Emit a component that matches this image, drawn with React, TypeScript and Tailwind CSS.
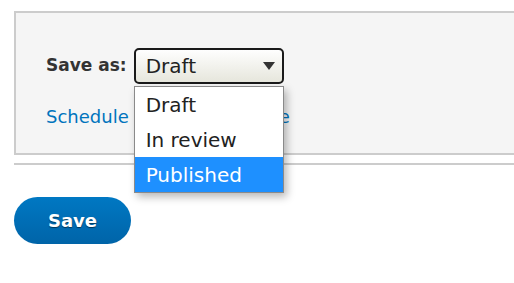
export default function App() {
  const options = ["Draft", "In review", "Published"];

  return (
    <div className="min-h-screen bg-white pl-[14px] pt-[11px] font-['DejaVu_Sans',sans-serif]">
      {/* panneau de l'état de modération */}
      <div className="h-[144px] border-2 border-r-0 border-[#cccccc] bg-[#f5f5f5] pl-[30px] pt-[35px]">
        <div className="flex items-center gap-[7px]">
          <label className="text-[17px] font-bold text-[#333333]">Save as:</label>
          <div className="relative">
            <div className="flex h-[36px] w-[150px] items-center justify-between rounded-[5px] border-2 border-[#1a1a1a] bg-gradient-to-b from-[#fefefe] to-[#e6e6dc] pl-[10px] pr-[7px] text-[20px] text-[#222222]">
              <span>Draft</span>
              <svg width="12" height="8" viewBox="0 0 12 8">
                <path d="M0 0h12L6 8z" fill="#333333" />
              </svg>
            </div>
            <ul className="absolute left-0 top-[38px] w-[150px] border border-[#8a8a8a] bg-white shadow-[3px_4px_8px_rgba(0,0,0,0.28)]">
              {options.map((o) => (
                <li
                  key={o}
                  className={
                    "flex h-[35px] items-center pl-[11px] text-[20px] " +
                    (o === "Published" ? "bg-[#1e90ff] text-white" : "text-[#222222]")
                  }
                >
                  {o}
                </li>
              ))}
            </ul>
          </div>
        </div>
        <a href="#" className="mt-[22px] block text-[18px] leading-[22px] text-[#0074bd]">
          Schedule moderation state
        </a>
      </div>

      <div className="mt-[8px] h-[2px] bg-[#cccccc]" />

      <button className="mt-[32px] h-[47px] w-[117px] rounded-full bg-gradient-to-b from-[#0078c3] to-[#0064a8] text-[18px] font-bold text-white [text-shadow:0_1px_1px_rgba(0,0,0,0.5)]">
        Save
      </button>
    </div>
  );
}
